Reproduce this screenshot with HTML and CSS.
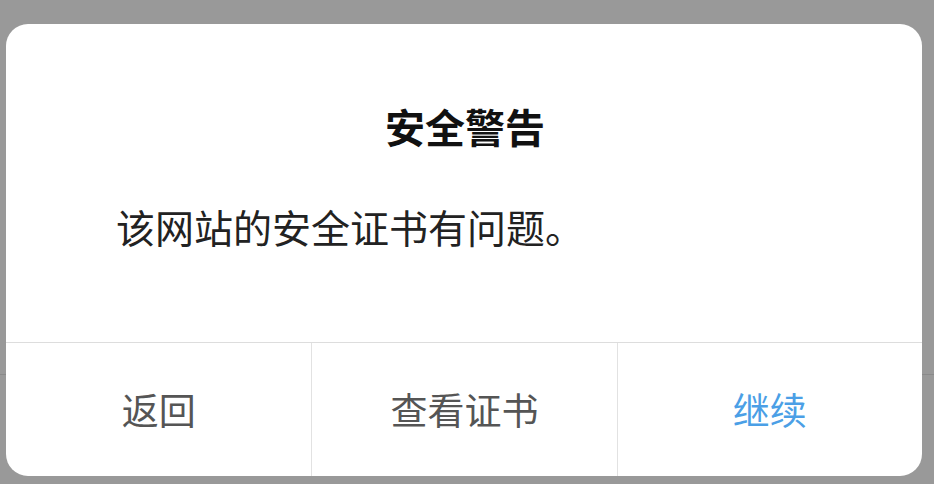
FILE: index.html
```html
<!DOCTYPE html>
<html lang="zh-CN">
<head>
<meta charset="utf-8">
<title>安全警告</title>
<link rel="stylesheet" href="styles.css">
</head>
<body>
<div class="backdrop-line"></div>
<div class="dialog">
  <div class="body">
    <h1 class="title">安全警告</h1>
    <p class="message">该网站的安全证书有问题。</p>
  </div>
  <div class="actions">
    <div class="btn">返回</div>
    <div class="btn">查看证书</div>
    <div class="btn primary">继续</div>
  </div>
</div>
</body>
</html>
```

FILE: styles.css
```css
html, body {
  margin: 0;
  padding: 0;
}
body {
  width: 934px;
  height: 484px;
  background: #999999;
  font-family: "Noto Sans CJK SC", "Noto Sans", sans-serif;
  overflow: hidden;
  position: relative;
}
.backdrop-line {
  position: absolute;
  left: 0;
  right: 0;
  top: 374px;
  height: 1px;
  background: #8a8a8a;
}
.dialog {
  position: relative;
  margin: 24px 0 0 6px;
  width: 916px;
  height: 452px;
  background: #ffffff;
  border-radius: 22px;
  overflow: hidden;
  display: flex;
  flex-direction: column;
}
.body {
  height: 318px;
  padding-top: 82px;
  box-sizing: border-box;
}
.title {
  margin: 0;
  font-size: 40px;
  line-height: 40px;
  font-weight: 700;
  text-align: center;
  color: #111111;
  padding-left: 2px;
}
.message {
  margin: 60px 0 0 0;
  padding-left: 110px;
  font-size: 39px;
  line-height: 40px;
  color: #222222;
}
.actions {
  flex: 1;
  display: grid;
  grid-template-columns: 1fr 1fr 1fr;
  border-top: 1px solid #dddddd;
}
.btn {
  display: flex;
  align-items: center;
  justify-content: center;
  font-size: 37px;
  color: #555555;
  border-left: 1px solid #e2e2e2;
  padding-bottom: 2px;
}
.btn:first-child {
  border-left: none;
}
.btn.primary {
  color: #4b9fe6;
}
```
